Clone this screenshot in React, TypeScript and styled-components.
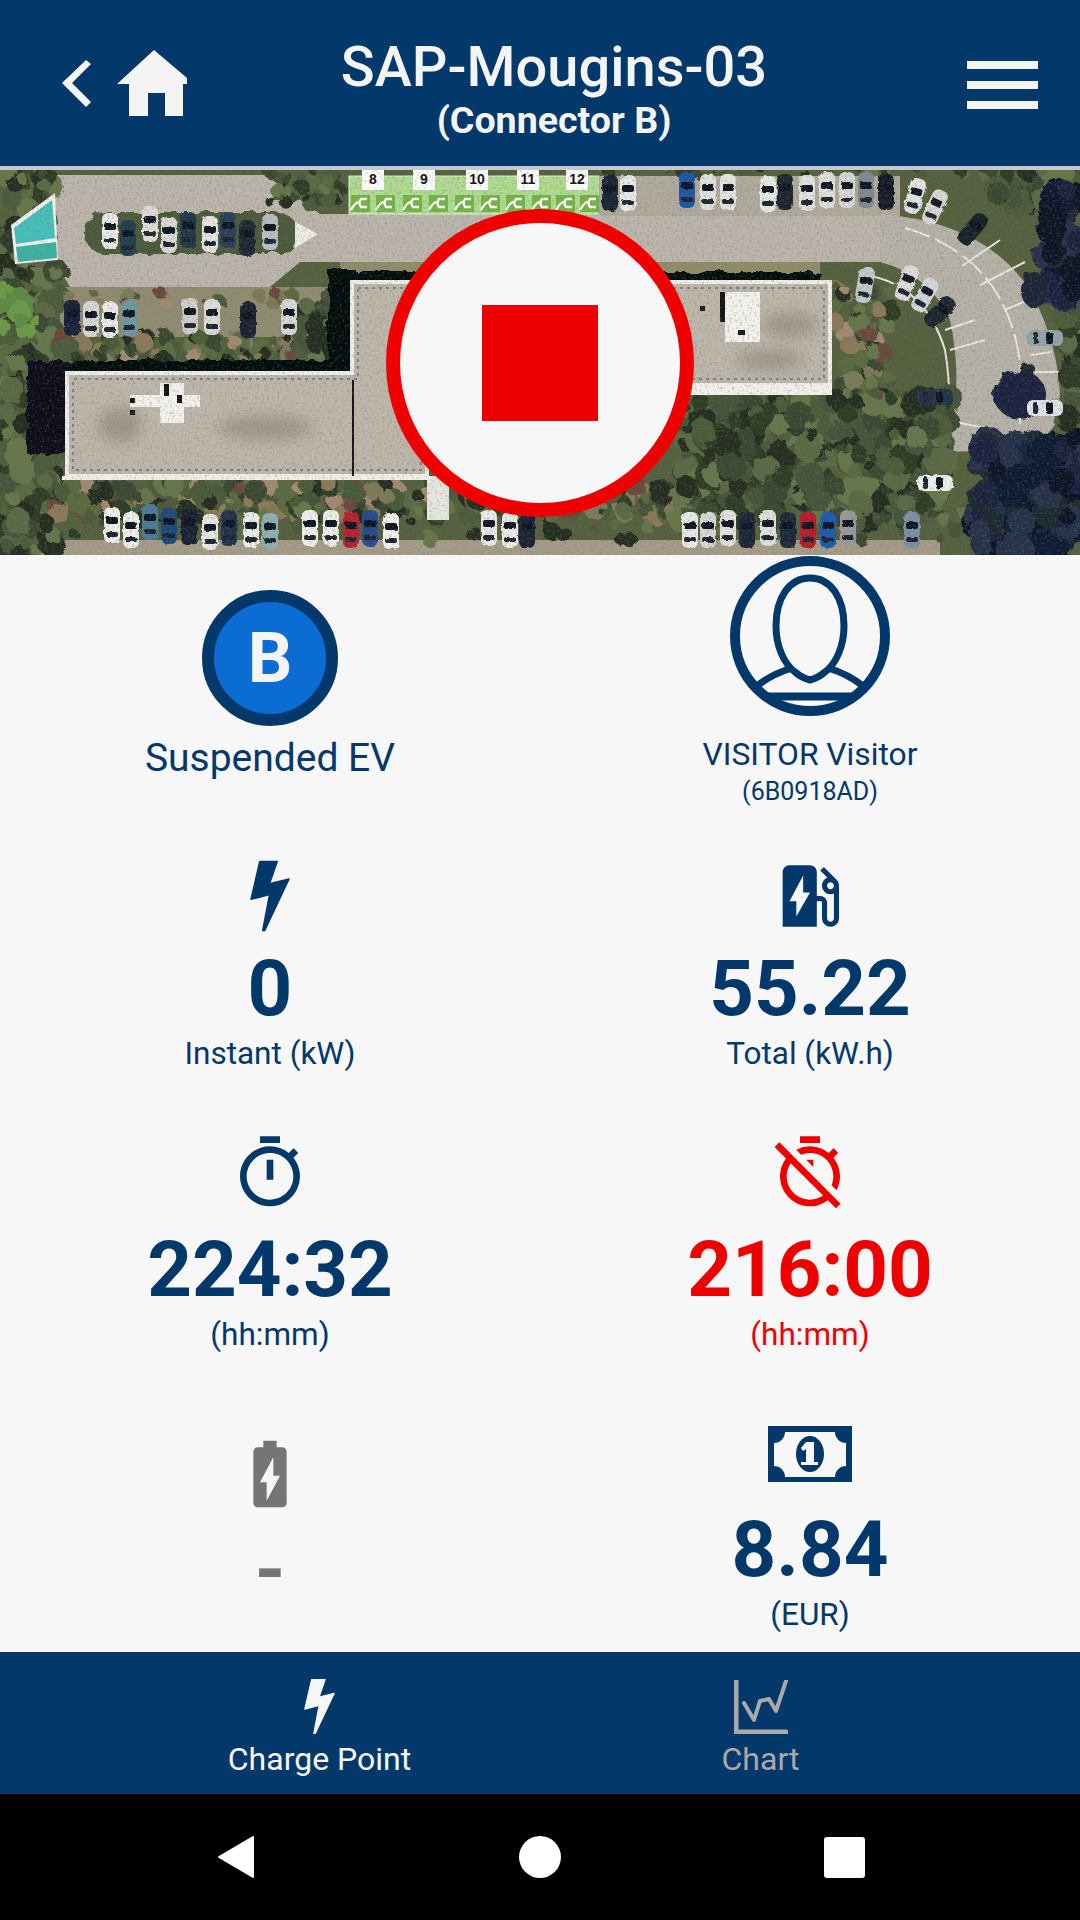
import React from 'react';
import styled, { createGlobalStyle } from 'styled-components';
import { MdEvStation, MdOutlineTimer, MdOutlineTimerOff, MdBatteryChargingFull } from 'react-icons/md';

const NAVY = '#03386a';
const RED = '#ee0000';
const GREY = '#757575';
const PAPER = '#f7f7f7';
const FROST = '#f4f4f4';

const GlobalStyle = createGlobalStyle`
  html, body {
    margin: 0;
    padding: 0;
    background: ${PAPER};
  }
  body {
    font-family: Roboto, "Liberation Sans", sans-serif;
  }
`;

const Screen = styled.div`
  width: 1080px;
  height: 1920px;
  display: flex;
  flex-direction: column;
  overflow: hidden;
`;

const Header = styled.header`
  height: 166px;
  flex: none;
  display: flex;
  align-items: center;
  background: ${NAVY};
  color: ${FROST};
  border-bottom: 4px solid #c4c9cd;
`;

const HeaderLeft = styled.div`
  display: flex;
  align-items: center;
  gap: 26px;
  padding-left: 62px;
`;

const HeaderTitle = styled.div`
  flex: 1;
  padding: 11px 46px 0 0;
  display: flex;
  flex-direction: column;
  align-items: center;
`;

const Title = styled.div`
  font-size: 56px;
  font-weight: 500;
  line-height: 64px;
`;

const Subtitle = styled.div`
  font-size: 37.6px;
  font-weight: 700;
  line-height: 43px;
`;

const MenuButton = styled.div`
  width: 71px;
  margin: 4px 42px 0 0;
  display: flex;
  flex-direction: column;
  gap: 12px;
`;

const MenuBar = styled.div`
  height: 8px;
  background: ${FROST};
`;

const MapSection = styled.section`
  position: relative;
  height: 385px;
  flex: none;
  overflow: hidden;
`;

const MapArt = styled.svg`
  display: block;
  width: 1080px;
  height: 385px;
`;

const StopButton = styled.button`
  position: absolute;
  left: 50%;
  top: 39px;
  width: 308px;
  height: 308px;
  transform: translateX(-50%);
  box-sizing: border-box;
  padding: 0;
  border: 14px solid ${RED};
  border-radius: 50%;
  background: ${PAPER};
  display: flex;
  align-items: center;
  justify-content: center;
`;

const StopSquare = styled.span`
  width: 116px;
  height: 116px;
  background: ${RED};
`;

const Details = styled.main`
  height: 1097px;
  flex: none;
  background: ${PAPER};
  display: grid;
  grid-template-columns: 540px 540px;
  grid-template-rows: 274px 273px 284px 266px;
`;

const Cell = styled.div<{ $top?: number; $color?: string }>`
  padding-top: ${(p) => p.$top ?? 20}px;
  display: flex;
  flex-direction: column;
  align-items: center;
  color: ${(p) => p.$color ?? NAVY};
`;

const IconSlot = styled.div<{ $height: number }>`
  height: ${(p) => p.$height}px;
  display: flex;
  align-items: center;
  justify-content: center;
`;

const Value = styled.div`
  height: 96px;
  font-size: 78px;
  font-weight: 700;
  line-height: 96px;
`;

const Caption = styled.div`
  height: 34px;
  font-size: 31.5px;
  line-height: 34px;
`;

const Badge = styled.div`
  width: 136px;
  height: 136px;
  box-sizing: border-box;
  border: 12px solid ${NAVY};
  border-radius: 50%;
  background: #0b6dd4;
  color: ${FROST};
  font-size: 70px;
  font-weight: 700;
  display: flex;
  align-items: center;
  justify-content: center;
`;

const Status = styled.div`
  margin-top: 10px;
  font-size: 39px;
  line-height: 44px;
`;

const UserName = styled.div`
  margin-top: 18px;
  font-size: 31.8px;
  line-height: 40px;
`;

const UserBadge = styled.div`
  margin-top: 3px;
  font-size: 25px;
  line-height: 30px;
`;

const TabBar = styled.nav`
  height: 142px;
  flex: none;
  padding: 0 99px;
  display: grid;
  grid-template-columns: 1fr 1fr;
  background: ${NAVY};
`;

const Tab = styled.div<{ $active?: boolean }>`
  padding-top: 26px;
  display: flex;
  flex-direction: column;
  align-items: center;
  color: ${(p) => (p.$active ? '#f7f7f7' : '#a9a9a9')};
`;

const TabIcon = styled.div`
  height: 57px;
  display: flex;
  align-items: center;
`;

const TabLabel = styled.div`
  margin-top: 4px;
  font-size: 32px;
  line-height: 40px;
`;

const SystemNav = styled.div`
  height: 126px;
  flex: none;
  box-sizing: border-box;
  padding: 0 215px 0 217px;
  display: flex;
  align-items: center;
  justify-content: space-between;
  background: #000;
`;

const NavCircle = styled.div`
  width: 42px;
  height: 42px;
  border-radius: 50%;
  background: #fff;
`;

const NavSquare = styled.div`
  width: 41px;
  height: 41px;
  border-radius: 3px;
  background: #fff;
`;

// icons

const BackIcon = () => (
  <svg width="29" height="47" viewBox="0 0 29 47">
    <polygon points="24,0 29,4 10,23 29,42 24,47 0,23" fill="currentColor" />
  </svg>
);

const HomeIcon = () => (
  <svg width="70" height="66" viewBox="117 50 70 66">
    <path d="M117 84 L154 50 L187 78 V84 H183 V116 H165 V93 H148 V116 H129 V84 Z" fill="currentColor" />
  </svg>
);

const BoltIcon = ({ width, height }: { width: number; height: number }) => (
  <svg width={width} height={height} viewBox="40 8 41 73">
    <path
      d="M50 9 H68 L60 32 L80 27 L55 80 H53 L60 43 L41 48 Z"
      fill="currentColor"
      stroke="currentColor"
      strokeWidth="1.5"
      strokeLinejoin="round"
    />
  </svg>
);

const ChartIcon = () => (
  <svg width="54" height="54" viewBox="733 1677 54 54" fill="none" stroke="currentColor" strokeLinecap="round" strokeLinejoin="round">
    <path d="M735 1678 V1729 H785" strokeWidth="5" />
    <path d="M743 1700 L753 1717 L759 1698 L768 1696 L775 1708 L785 1678" strokeWidth="4" />
  </svg>
);

const AvatarIcon = () => (
  <svg width="160" height="160" viewBox="0 0 160 160" fill="none" stroke={NAVY}>
    <circle cx="80" cy="80" r="75" strokeWidth="10" />
    <path
      d="M80 22 C101 22 114 42 114 70 C114 90 106 108 95 116 Q88 122 80 124 Q72 122 65 116 C54 108 46 90 46 70 C46 42 59 22 80 22 Z"
      strokeWidth="7"
    />
    <path d="M27 130 Q42 118 62 112 M98 112 Q118 118 133 130" strokeWidth="7" />
    <path d="M34 140.5 H126" strokeWidth="8" />
  </svg>
);

const BillIcon = () => (
  <svg width="84" height="56" viewBox="0 0 84 56">
    <rect width="84" height="56" rx="3" fill={NAVY} />
    <rect x="6" y="6" width="72" height="45" fill={PAPER} />
    <g fill={NAVY}>
      <circle cx="6" cy="6" r="11" />
      <circle cx="78" cy="6" r="11" />
      <circle cx="6" cy="51" r="11" />
      <circle cx="78" cy="51" r="11" />
      <rect width="84" height="6" rx="3" />
      <rect y="51" width="84" height="5" rx="2" />
      <ellipse cx="42" cy="28" rx="14" ry="18" />
    </g>
    <polygon
      points="38,16 46,16 46,36 50,36 50,39 33,39 33,36 38,36 38,23 35,25 33,22"
      fill={PAPER}
    />
  </svg>
);

// aerial picture of the site, coordinates are screen pixels

type Blob = [number, number, number, string];

const scatter = (
  seed: number,
  x: number,
  y: number,
  w: number,
  h: number,
  count: number,
  size: number,
  colors: string[],
): Blob[] => {
  let s = seed * 7919;
  const next = () => {
    s = (s * 16807) % 2147483647;
    return s / 2147483647;
  };
  return Array.from({ length: count }, () => [
    x + next() * w,
    y + next() * h,
    size * (0.5 + next()),
    colors[Math.floor(next() * colors.length)],
  ]);
};

const LEAVES = ['#3a4a30', '#4c5c3a', '#5a6a44', '#2f3d28', '#66764c', '#44543a', '#252f22'];
const DRY = ['#a08a70', '#8a7a5a', '#5c6a40', '#6a4a3c', '#7c7a58', '#4a5a3a'];
const SHADE = ['#101a33', '#1a2440', '#0c1226', '#27304a', '#1e2c30'];

const GREENERY: Blob[] = [
  ...scatter(11, 0, 170, 55, 110, 70, 8, LEAVES),
  ...scatter(12, 0, 270, 60, 285, 220, 10, LEAVES),
  ...scatter(22, 0, 292, 36, 40, 16, 8, ['#6c9a4a', '#5f8a44']),
  ...scatter(13, 60, 335, 270, 26, 90, 7, [...LEAVES, ...DRY]),
  ...scatter(23, 60, 292, 250, 12, 24, 5, DRY),
  ...scatter(24, 300, 290, 30, 70, 24, 9, LEAVES),
  ...scatter(14, 55, 482, 640, 34, 260, 8, [...LEAVES, ...DRY]),
  ...scatter(15, 40, 510, 930, 30, 70, 6, LEAVES),
  ...scatter(16, 680, 398, 270, 122, 380, 10, LEAVES),
  ...scatter(17, 834, 290, 60, 110, 70, 7, [...LEAVES, ...DRY]),
  ...scatter(18, 990, 170, 90, 36, 40, 9, LEAVES),
  ...scatter(19, 270, 170, 75, 36, 36, 6, LEAVES),
  ...scatter(20, 600, 166, 400, 8, 30, 5, LEAVES),
  ...scatter(21, 1058, 200, 22, 240, 40, 10, LEAVES),
];

const SHADOWS: Blob[] = [
  ...scatter(31, 1045, 190, 35, 110, 36, 12, SHADE),
  ...scatter(32, 975, 445, 105, 110, 120, 13, SHADE),
  ...scatter(33, 1012, 370, 18, 40, 12, 9, SHADE),
];

type Car = [number, number, string, number?];

const CARS: Car[] = [
  [110, 231, '#e9e9e6'], [128, 238, '#24404f'], [150, 224, '#dddcd8'], [169, 235, '#d9d9d6'],
  [188, 230, '#22394a'], [210, 234, '#e4e4e0'], [228, 230, '#2a3f58'], [247, 238, '#1d2a33'],
  [270, 232, '#b9bcc0'], [72, 318, '#14233a'], [91, 319, '#d7d7d4'], [110, 320, '#e9e9e6'],
  [129, 318, '#6c98a0'], [190, 316, '#cfcfcb'], [212, 317, '#dcdcd8'], [248, 320, '#1a2230'],
  [289, 317, '#d8d8d4'], [112, 525, '#eeeeea'], [131, 530, '#eeeeea'], [150, 522, '#4a7c96'],
  [169, 526, '#1f4a7a'], [189, 527, '#182433'], [210, 532, '#e6e6e2'], [229, 528, '#233349'],
  [251, 530, '#ebebe7'], [270, 531, '#8fb0b2'], [310, 528, '#efefeb'], [331, 528, '#ecece8'],
  [351, 530, '#b52430'], [370, 528, '#2a4a8a'], [391, 531, '#f0f0ec'], [489, 528, '#eaeae6'],
  [510, 530, '#ebebe7'], [527, 530, '#1a2436'], [690, 530, '#e8e8e4'], [708, 530, '#d8d8d4'],
  [728, 528, '#e2e2de'], [747, 530, '#1c2838'], [768, 528, '#dfdfdb'], [788, 530, '#1e2a38'],
  [808, 530, '#b81c2c'], [828, 530, '#1e5cb0'], [848, 528, '#9a9a9a'], [912, 530, '#7d8ea8'],
  [610, 193, '#192536'], [628, 193, '#e9e9e5'], [687, 190, '#1d56a8'], [708, 192, '#e2e2de'],
  [728, 192, '#e4e4e0'], [768, 194, '#e6e6e2'], [785, 192, '#1c262e'], [807, 193, '#e2e2de'],
  [827, 190, '#dfdfdb'], [847, 190, '#d7d7d3'], [866, 190, '#7f8a90'], [886, 192, '#171d26'],
  [915, 196, '#e2e2de', 15], [935, 207, '#d8d8d4', 25], [973, 229, '#18202c', 40],
  [907, 283, '#dcdcd8', 20], [925, 295, '#d4d8dc', 30], [940, 312, '#1a2633', 45],
  [865, 285, '#c4c8c8', 10], [1045, 338, '#8fa5a8', 90], [1045, 408, '#e0e4ea', 90],
  [935, 397, '#22304a', 90], [935, 483, '#efefeb', 90],
];

const CarShape = ({ car }: { car: Car }) => {
  const [x, y, color, turn = 0] = car;
  return (
    <g transform={`rotate(${turn} ${x} ${y})`}>
      <rect x={x - 8} y={y - 18} width="16" height="36" rx="6" fill={color} />
      <rect x={x - 6} y={y - 8} width="12" height="7" rx="2" fill="#111820" />
      <rect x={x - 6} y={y + 7} width="12" height="5" rx="2" fill="#1f2730" />
    </g>
  );
};

const BAYS = [360, 385, 412, 438, 464, 490, 515, 541, 565, 589];
const BAY_LABELS: [string, number][] = [['8', 373], ['9', 424], ['10', 477], ['11', 528], ['12', 577]];

const SiteMap = () => (
  <MapArt viewBox="0 170 1080 385">
    <defs>
      <filter id="rough" x="-2%" y="-2%" width="104%" height="104%">
        <feTurbulence type="fractalNoise" baseFrequency="0.09" numOctaves="3" seed="4" />
        <feDisplacementMap in="SourceGraphic" scale="9" />
      </filter>
      <filter id="fuzz" x="-2%" y="-2%" width="104%" height="104%">
        <feTurbulence type="fractalNoise" baseFrequency="0.2" numOctaves="2" seed="7" />
        <feDisplacementMap in="SourceGraphic" scale="3" />
      </filter>
      <filter id="grain" x="0" y="0" width="100%" height="100%">
        <feTurbulence type="fractalNoise" baseFrequency="0.4" numOctaves="2" seed="9" />
        <feColorMatrix values="0 0 0 0 0.2  0 0 0 0 0.18  0 0 0 0 0.14  0 0 0 1.1 -0.55" />
      </filter>
      <filter id="soft">
        <feGaussianBlur stdDeviation="7" />
      </filter>
    </defs>

    <rect x="0" y="170" width="1080" height="385" fill="#55603f" />

    {/* road and parking surface */}
    <path d="M52 175 H265 L320 214 H880 L880 262 H300 L270 287 H70 L55 262 Z" fill="#bbb5ab" />
    <rect x="600" y="176" width="300" height="40" fill="#b0aa9d" />
    <path
      d="M880 214 Q985 222 1030 290 Q1062 350 1060 410 Q1055 440 1015 450 L945 452 Q965 390 950 320 Q930 275 880 262 Z"
      fill="#b6b2a8"
    />
    <rect x="60" y="287" width="290" height="50" fill="#8f8c72" />
    <rect x="340" y="262" width="480" height="14" fill="#8f8c68" />
    <rect x="40" y="540" width="900" height="15" fill="#a49c88" />
    <path d="M905 228 Q1000 255 1018 350 Q1030 420 1005 470" fill="none" stroke="#e8e6de" strokeWidth="2" strokeDasharray="26 6" />
    <path d="M866 275 Q925 285 945 350 Q955 410 940 440" fill="none" stroke="#e8e6de" strokeWidth="2" />
    <g stroke="#e8e6de" strokeWidth="2">
      <path d="M962 266 L1000 240 M980 285 L1025 262 M1005 310 L1040 295 M1030 355 L1052 352 M1035 372 L1060 372" />
      <path d="M945 330 L975 320 M950 350 L985 340 M945 420 L985 428" />
    </g>

    <g filter="url(#rough)">
      {GREENERY.map(([cx, cy, r, fill], i) => (
        <circle key={i} cx={cx} cy={cy} r={r} fill={fill} />
      ))}
      {/* island between the two parking rows */}
      <rect x="85" y="212" width="212" height="42" rx="20" fill="#4c5a3c" />
      {SHADOWS.map(([cx, cy, r, fill], i) => (
        <circle key={i} cx={cx} cy={cy} r={r} fill={fill} />
      ))}
      <ellipse cx="1020" cy="395" rx="26" ry="24" fill="#1a2340" />
      <ellipse cx="1035" cy="290" rx="14" ry="18" fill="#1b2538" />

      {/* building shadows */}
      <rect x="27" y="360" width="330" height="16" fill="#05070f" />
      <rect x="27" y="360" width="44" height="94" fill="#070b1a" />
      <rect x="328" y="270" width="28" height="100" fill="#060810" />
      <rect x="340" y="272" width="480" height="12" fill="#05070c" />
    </g>

    {/* teal pool roof */}
    <polygon points="11,225 55,193 58,260 15,264" fill="#eef1ec" />
    <polygon points="14,228 52,200 55,238 16,244" fill="#45c0bd" />
    <polygon points="16,247 56,242 57,258 18,262" fill="#3fb0a4" />
    <polygon points="295,222 318,234 295,248" fill="#ecebe6" />

    {/* roof */}
    <path d="M352 282 H830 V385 H427 V476 H67 V373 H352 Z" fill="#bdb6ab" stroke="#efeee9" strokeWidth="4" />
    <path
      d="M358 288 H824 V379 H421 V470 H73 V379 H358 Z"
      fill="none"
      stroke="#7f8084"
      strokeWidth="2"
      strokeDasharray="3 4"
    />
    <g filter="url(#soft)" fill="#8b8272" opacity="0.6">
      <ellipse cx="120" cy="425" rx="22" ry="18" />
      <ellipse cx="265" cy="428" rx="48" ry="12" />
      <ellipse cx="770" cy="360" rx="34" ry="10" />
      <ellipse cx="790" cy="325" rx="28" ry="12" />
    </g>
    <g fill="#f2f1ec">
      <rect x="130" y="395" width="70" height="12" />
      <rect x="160" y="383" width="24" height="40" />
      <rect x="725" y="292" width="35" height="50" />
    </g>
    <g fill="#14141a">
      <rect x="130" y="398" width="5" height="5" />
      <rect x="130" y="410" width="5" height="5" />
      <rect x="164" y="384" width="5" height="12" />
      <rect x="177" y="395" width="5" height="8" />
      <rect x="720" y="292" width="5" height="30" />
      <rect x="700" y="306" width="5" height="5" />
      <rect x="738" y="330" width="7" height="5" />
      <rect x="352" y="380" width="2" height="96" />
    </g>
    <rect x="690" y="385" width="142" height="10" fill="#f1f0ea" />
    <rect x="427" y="476" height="44" width="22" fill="#e6e6e0" />
    <rect x="62" y="476" width="370" height="4" fill="#efeee8" />

    {/* charging bays */}
    <rect x="349" y="176" width="250" height="38" fill="#aedb90" stroke="#e8f3de" strokeWidth="1" />
    {BAYS.map((x) => (
      <g key={x}>
        <rect x={x - 9} y="195" width="19" height="17" fill="#74b545" />
        <path
          d={`M${x - 9} 210 Q${x - 4} 201 ${x} 202 M${x + 7} 199 H${x + 1} Q${x - 2} 203 ${x + 1} 207 H${x + 7}`}
          fill="none"
          stroke="#fff"
          strokeWidth="2.4"
        />
      </g>
    ))}
    {BAY_LABELS.map(([label, x]) => (
      <g key={label}>
        <rect x={x - 11} y="170" width="22" height="20" fill="#fff" />
        <text x={x} y="184" textAnchor="middle" fontFamily="'Liberation Sans', sans-serif" fontWeight="700" fontSize="14" fill="#111">
          {label}
        </text>
      </g>
    ))}

    <g filter="url(#fuzz)">
      {CARS.map((car, i) => (
        <CarShape key={i} car={car} />
      ))}
    </g>

    <rect x="0" y="170" width="1080" height="385" filter="url(#grain)" />
  </MapArt>
);

export default function App() {
  return (
    <>
      <GlobalStyle />
      <Screen>
        <Header>
          <HeaderLeft>
            <BackIcon />
            <HomeIcon />
          </HeaderLeft>
          <HeaderTitle>
            <Title>SAP-Mougins-03</Title>
            <Subtitle>(Connector B)</Subtitle>
          </HeaderTitle>
          <MenuButton>
            <MenuBar />
            <MenuBar />
            <MenuBar />
          </MenuButton>
        </Header>

        <MapSection>
          <SiteMap />
          <StopButton aria-label="Stop">
            <StopSquare />
          </StopButton>
        </MapSection>

        <Details>
          <Cell $top={35}>
            <Badge>B</Badge>
            <Status>Suspended EV</Status>
          </Cell>
          <Cell $top={1}>
            <AvatarIcon />
            <UserName>VISITOR Visitor</UserName>
            <UserBadge>(6B0918AD)</UserBadge>
          </Cell>

          <Cell $top={21}>
            <IconSlot $height={91}>
              <BoltIcon width={40} height={72} />
            </IconSlot>
            <Value>0</Value>
            <Caption>Instant (kW)</Caption>
          </Cell>
          <Cell $top={21}>
            <IconSlot $height={91}>
              <MdEvStation size={82} />
            </IconSlot>
            <Value>55.22</Value>
            <Caption>Total (kW.h)</Caption>
          </Cell>

          <Cell $top={22}>
            <IconSlot $height={98}>
              <MdOutlineTimer size={80} />
            </IconSlot>
            <Value>224:32</Value>
            <Caption>(hh:mm)</Caption>
          </Cell>
          <Cell $top={22} $color={RED}>
            <IconSlot $height={98}>
              <MdOutlineTimerOff size={80} />
            </IconSlot>
            <Value>216:00</Value>
            <Caption>(hh:mm)</Caption>
          </Cell>

          <Cell $top={39} $color={GREY}>
            <IconSlot $height={98}>
              <MdBatteryChargingFull size={80} />
            </IconSlot>
            <Value>-</Value>
          </Cell>
          <Cell>
            <IconSlot $height={96}>
              <BillIcon />
            </IconSlot>
            <Value>8.84</Value>
            <Caption>(EUR)</Caption>
          </Cell>
        </Details>

        <TabBar>
          <Tab $active>
            <TabIcon>
              <BoltIcon width={31} height={57} />
            </TabIcon>
            <TabLabel>Charge Point</TabLabel>
          </Tab>
          <Tab>
            <TabIcon>
              <ChartIcon />
            </TabIcon>
            <TabLabel>Chart</TabLabel>
          </Tab>
        </TabBar>

        <SystemNav>
          <svg width="38" height="42" viewBox="0 0 38 42">
            <path d="M36 1 V41 L2 21 Z" fill="#fff" stroke="#fff" strokeWidth="2" strokeLinejoin="round" />
          </svg>
          <NavCircle />
          <NavSquare />
        </SystemNav>
      </Screen>
    </>
  );
}
